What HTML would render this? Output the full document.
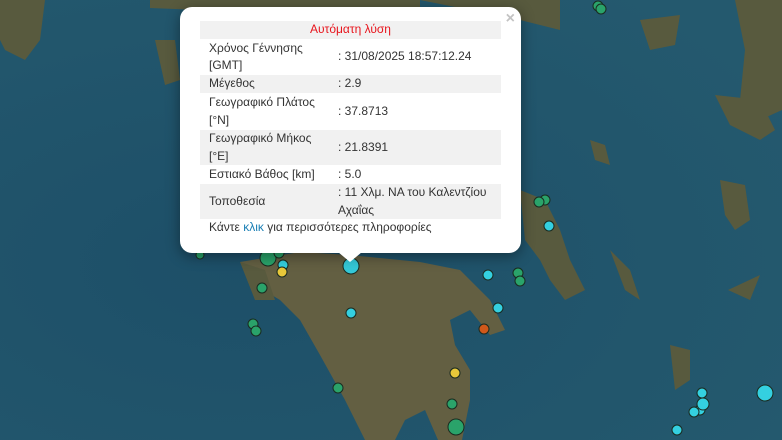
<!DOCTYPE html>
<html><head><meta charset="utf-8"><style>
body{margin:0;width:782px;height:440px;overflow:hidden;background:#1f5168;font-family:"Liberation Sans",Arial,sans-serif;position:relative}
svg{position:absolute;left:0;top:0}
.pop{position:absolute;left:180px;top:7px;width:341px;height:246px;background:#fff;border-radius:12px;box-shadow:0 3px 14px rgba(0,0,0,.4)}
.tip{position:absolute;left:338px;top:252px;width:0;height:0;border-left:12px solid transparent;border-right:12px solid transparent;border-top:10px solid #fff}
.x{position:absolute;right:6px;top:3px;color:#c3c3c3;font-size:16px;font-weight:bold}
table{position:absolute;left:20px;top:14px;width:301px;border-collapse:collapse;font-size:12px;color:#333;line-height:17.5px;table-layout:fixed}
td{padding:0 0 0 9px;vertical-align:middle}
tr.g{background:#f1f1f1}
td.v{padding-left:0}
.h{color:#e8141c;text-align:center;height:18px;padding:0}
.f{position:absolute;left:29px;top:213px;font-size:12px;color:#333}
.f span{color:#1a7fb5}
</style></head><body>
<svg width="782" height="440">
<defs><radialGradient id="s" cx="30%" cy="60%" r="80%"><stop offset="0" stop-color="#1d4f68"/><stop offset="1" stop-color="#24596e"/></radialGradient></defs>
<rect width="782" height="440" fill="url(#s)"/>
<g fill="#585a3e">
<path d="M0 0H45L40 40L25 60L5 50L0 40Z"/>
<path d="M150 0H420V12L300 14L200 10L150 8Z"/>
<path d="M420 0H560V30L520 20L470 10Z"/>
<path d="M240 262L300 252L350 255L420 262L460 270L490 300L505 330L490 335L470 310L450 320L455 345L470 370L470 400L462 440H438L425 410L405 420L395 440H365L345 400L320 355L300 320L280 300L255 285Z" fill="#635f42"/>
<path d="M520 190L545 200L560 230L570 260L585 290L565 300L550 280L540 260L525 240Z"/>
<path d="M735 0H782V110L760 120L740 100L745 50Z"/>
<path d="M715 95L760 100L775 130L760 140L730 125Z"/>
<path d="M640 20L680 15L675 45L650 50Z"/>
<path d="M720 180L745 185L750 220L735 230L725 215Z"/>
<path d="M590 140L605 145L610 165L595 160Z"/>
<path d="M610 250L630 270L640 300L625 290Z"/>
<path d="M670 345L690 350L690 380L675 390Z"/>
<path d="M728 290L760 275L750 300Z"/>
<path d="M155 40L175 40L180 80L165 85Z"/>
<path d="M240 262L265 270L275 300L255 300Z"/>
</g>
<g stroke="#1a2b20" stroke-width="1">
<circle cx="598" cy="6" r="5" fill="#2aa36a"/><circle cx="601" cy="9" r="5" fill="#2aa36a"/>
<circle cx="200" cy="255" r="4" fill="#2aa36a"/>
<circle cx="268" cy="258" r="8" fill="#2aa36a"/><circle cx="279" cy="253" r="5" fill="#2aa36a"/>
<circle cx="283" cy="265" r="5" fill="#34d0e0"/><circle cx="282" cy="272" r="5" fill="#e8c83a"/>
<circle cx="262" cy="288" r="5" fill="#2aa36a"/>
<circle cx="351" cy="266" r="8" fill="#34c8d8"/>
<circle cx="351" cy="313" r="5" fill="#34d0e0"/>
<circle cx="253" cy="324" r="5" fill="#2aa36a"/><circle cx="256" cy="331" r="5" fill="#2aa36a"/>
<circle cx="488" cy="275" r="5" fill="#34d0e0"/>
<circle cx="518" cy="273" r="5" fill="#2aa36a"/><circle cx="520" cy="281" r="5" fill="#2aa36a"/>
<circle cx="545" cy="200" r="5" fill="#2aa36a"/><circle cx="539" cy="202" r="5" fill="#2aa36a"/>
<circle cx="549" cy="226" r="5" fill="#34d0e0"/>
<circle cx="498" cy="308" r="5" fill="#34d0e0"/>
<circle cx="484" cy="329" r="5" fill="#d0581a"/>
<circle cx="455" cy="373" r="5" fill="#e8c83a"/>
<circle cx="338" cy="388" r="5" fill="#2aa36a"/>
<circle cx="452" cy="404" r="5" fill="#2aa36a"/>
<circle cx="456" cy="427" r="8" fill="#2aa36a"/>
<circle cx="765" cy="393" r="8" fill="#34d0e0"/>
<circle cx="702" cy="393" r="5" fill="#34d0e0"/><circle cx="700" cy="410" r="5" fill="#34d0e0"/><circle cx="703" cy="404" r="6" fill="#34d0e0"/><circle cx="694" cy="412" r="5" fill="#34d0e0"/>
<circle cx="677" cy="430" r="5" fill="#34d0e0"/>
</g>
</svg>
<div class="pop">
<div class="x">×</div>
<table>
<colgroup><col style="width:138px"><col></colgroup>
<tr class="g"><td colspan="2" class="h">Αυτόματη λύση</td></tr>
<tr style="height:36px"><td>Χρόνος Γέννησης<br>[GMT]</td><td class="v">: 31/08/2025 18:57:12.24</td></tr>
<tr class="g" style="height:18px"><td>Μέγεθος</td><td class="v">: 2.9</td></tr>
<tr style="height:37px"><td>Γεωγραφικό Πλάτος<br>[°N]</td><td class="v">: 37.8713</td></tr>
<tr class="g" style="height:35px"><td>Γεωγραφικό Μήκος<br>[°E]</td><td class="v">: 21.8391</td></tr>
<tr style="height:19px"><td>Εστιακό Βάθος [km]</td><td class="v">: 5.0</td></tr>
<tr class="g" style="height:35px"><td>Τοποθεσία</td><td class="v">: 11 Χλμ. ΝΑ του Καλεντζίου<br>Αχαΐας</td></tr>
</table>
<div class="f">Κάντε <span>κλικ</span> για περισσότερες πληροφορίες</div>
</div>
<div class="tip"></div>
</body></html>
